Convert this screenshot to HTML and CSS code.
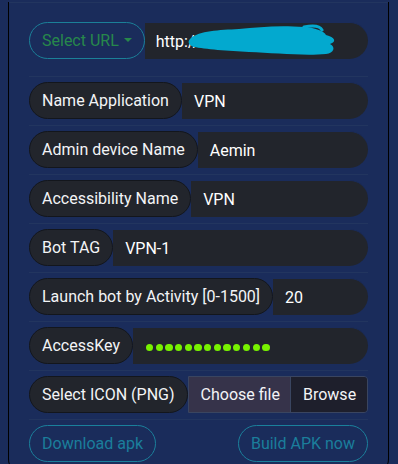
FILE: index.html
```html
<!DOCTYPE html>
<html lang="en">
<head>
<meta charset="utf-8">
<title>Build APK</title>
<link rel="stylesheet" href="styles.css">
</head>
<body>
<div class="card">
  <div class="topline"></div>
  <div class="form">
    <div class="row row-first">
      <button class="btn btn-url">Select URL<span class="caret"></span></button>
      <div class="field url-field">
        <span class="val">http://</span>
        <svg class="scribble" width="150" height="34" viewBox="183 22 150 34" aria-hidden="true">
          <path d="M187,37 C195,30 215,29 235,28 C255,26 275,24 300,26 C312,27 320,30 322,34 C331,36 333,41 326,43 C332,46 330,52 322,53 C300,55 270,52 245,51 C225,50 200,48 190,46 C184,44 183,40 187,37 Z" fill="#03a9cf"/>
          <path d="M300,26 C310,24 316,25 318,29" stroke="#03a9cf" stroke-width="3" fill="none" stroke-linecap="round"/>
        </svg>
      </div>
    </div>
    <div class="row">
      <span class="label">Name Application</span>
      <div class="field"><span class="val">VPN</span></div>
    </div>
    <div class="row">
      <span class="label">Admin device Name</span>
      <div class="field"><span class="val">Aemin</span></div>
    </div>
    <div class="row">
      <span class="label">Accessibility Name</span>
      <div class="field"><span class="val">VPN</span></div>
    </div>
    <div class="row">
      <span class="label">Bot TAG</span>
      <div class="field"><span class="val">VPN-1</span></div>
    </div>
    <div class="row">
      <span class="label">Launch bot by Activity [0-1500]</span>
      <div class="field"><span class="val">20</span></div>
    </div>
    <div class="row">
      <span class="label">AccessKey</span>
      <div class="field dots-field">
        <span class="dot"></span><span class="dot"></span><span class="dot"></span><span class="dot"></span><span class="dot"></span><span class="dot"></span><span class="dot"></span><span class="dot"></span><span class="dot"></span><span class="dot"></span><span class="dot"></span><span class="dot"></span><span class="dot"></span>
      </div>
    </div>
    <div class="row">
      <span class="label">Select ICON (PNG)</span>
      <div class="file">
        <span class="file-name">Choose file</span>
        <span class="file-browse">Browse</span>
      </div>
    </div>
    <div class="actions">
      <button class="btn btn-info">Download apk</button>
      <button class="btn btn-info">Build APK now</button>
    </div>
  </div>
</div>
</body>
</html>
```
FILE: styles.css
```css
* { box-sizing: border-box; }
html, body {
  margin: 0;
  padding: 0;
  background: #1a2c5b;
  font-family: Roboto, "Liberation Sans", sans-serif;
  font-size: 16px;
  color: #f3f4f6;
  overflow: hidden;
}
.card {
  margin-left: 8px;
  width: 381px;
  border-left: 1px solid #000;
  border-right: 1px solid #000;
  border-bottom: 1px solid #000;
  border-radius: 0 0 16px 16px;
  padding-bottom: 12px;
}
.topline {
  margin-top: 2px;
  height: 1px;
  background: #22355f;
}
.form {
  padding: 0 20px;
}
.row {
  display: flex;
  align-items: stretch;
  padding: 5px 0 6px;
  border-bottom: 1px solid #22355f;
}
.row-first {
  padding: 19px 0 17px;
}
.label {
  height: 37px;
  display: flex;
  align-items: center;
  padding: 0 12px;
  border: 1px solid #13161c;
  border-radius: 19px;
  background: #22252c;
  white-space: nowrap;
  color: #f3f4f6;
}
.field {
  position: relative;
  flex: 1;
  height: 37px;
  display: flex;
  align-items: center;
  padding: 1px 12px 0;
  background: #22252c;
  border-top: 1px solid #1a2c5b;
  border-radius: 0 19px 19px 0;
  color: #ffffff;
}
.url-field { padding-left: 11px; }
.scribble {
  position: absolute;
  left: 42px;
  top: 0;
}
.dots-field {
  gap: 2.4px;
  padding-left: 13px;
  padding-top: 3px;
}
.dot {
  width: 7.3px;
  height: 7.3px;
  border-radius: 50%;
  background: #78f200;
}
.btn {
  height: 37px;
  font-family: Roboto, "Liberation Sans", sans-serif;
  font-size: 16px;
  padding: 0 12px;
  background: transparent;
  border: 1px solid #1a809b;
  border-radius: 19px;
  display: flex;
  align-items: center;
  white-space: nowrap;
}
.btn-url {
  color: #27884b;
  border-color: #1b8098;
}
.caret {
  display: inline-block;
  margin-left: 5px;
  margin-top: -2px;
  border-top: 4.5px solid #27884b;
  border-left: 4px solid transparent;
  border-right: 4px solid transparent;
}
.btn-info {
  color: #1b7e9b;
}
.file {
  flex: 1;
  display: flex;
  height: 37px;
  border: 1px solid #3a4560;
  border-radius: 0 4px 4px 0;
  overflow: hidden;
}
.file-name {
  flex: none;
  display: flex;
  align-items: center;
  padding: 0 10px 0 12px;
  background: #36334a;
  color: #f3f4f6;
  white-space: nowrap;
}
.file-browse {
  flex: 1;
  display: flex;
  align-items: center;
  padding: 0 12px;
  background: #1e1f2c;
  border-left: 1px solid #3a4560;
  color: #f3f4f6;
  white-space: nowrap;
}
.actions {
  display: flex;
  justify-content: space-between;
  padding-top: 5px;
}
```
